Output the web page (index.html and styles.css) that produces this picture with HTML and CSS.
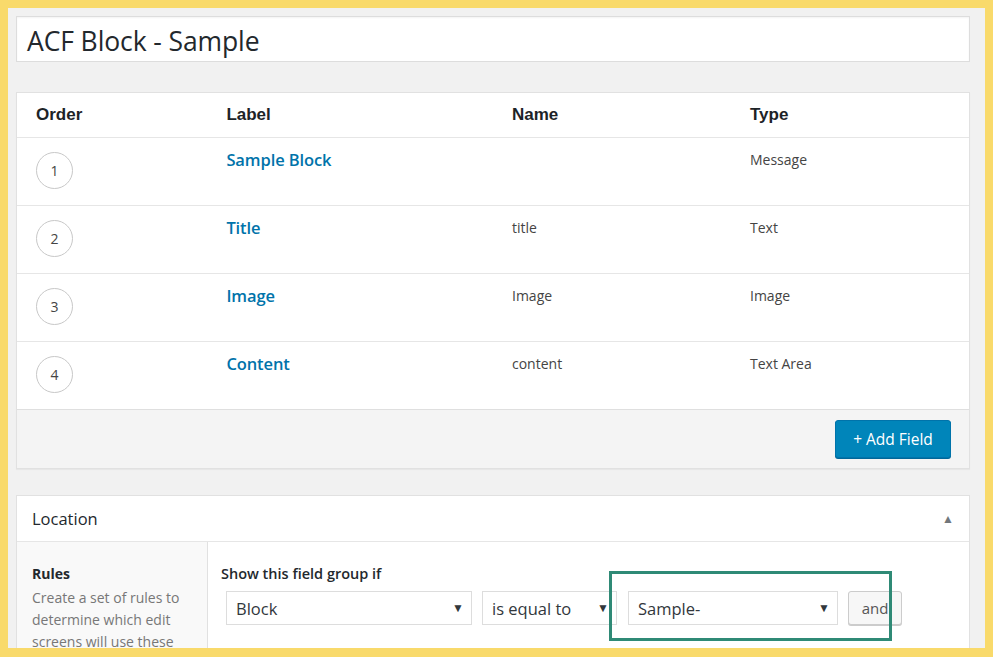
FILE: index.html
```html
<!DOCTYPE html>
<html>
<head>
<meta charset="utf-8">
<link rel="stylesheet" href="styles.css">
</head>
<body>
<div class="frame">
  <div class="title-input">ACF Block - Sample</div>

  <div class="fields">
    <div class="row head">
      <div class="cell c-order">Order</div>
      <div class="cell c-label">Label</div>
      <div class="cell c-name">Name</div>
      <div class="cell c-type">Type</div>
    </div>
    <div class="row">
      <div class="cell c-order"><span class="num">1</span></div>
      <div class="cell c-label"><a class="flabel">Sample Block</a></div>
      <div class="cell c-name"></div>
      <div class="cell c-type">Message</div>
    </div>
    <div class="row">
      <div class="cell c-order"><span class="num">2</span></div>
      <div class="cell c-label"><a class="flabel">Title</a></div>
      <div class="cell c-name">title</div>
      <div class="cell c-type">Text</div>
    </div>
    <div class="row">
      <div class="cell c-order"><span class="num">3</span></div>
      <div class="cell c-label"><a class="flabel">Image</a></div>
      <div class="cell c-name">Image</div>
      <div class="cell c-type">Image</div>
    </div>
    <div class="row">
      <div class="cell c-order"><span class="num">4</span></div>
      <div class="cell c-label"><a class="flabel">Content</a></div>
      <div class="cell c-name">content</div>
      <div class="cell c-type">Text Area</div>
    </div>
    <div class="foot">
      <button class="btn-primary">+ Add Field</button>
    </div>
  </div>

  <div class="location">
    <div class="loc-head">
      <span class="loc-title">Location</span>
      <span class="toggle">&#9650;</span>
    </div>
    <div class="loc-body">
      <div class="loc-side">
        <div class="rules-title">Rules</div>
        <div class="rules-desc">Create a set of rules to determine which edit screens will use these advanced custom fields</div>
      </div>
      <div class="loc-main">
        <div class="show-if">Show this field group if</div>
        <div class="rule">
          <div class="select s-param">Block<span class="arrow">&#9660;</span></div>
          <div class="select s-op">is equal to<span class="arrow">&#9660;</span></div>
          <div class="select s-val">Sample-<span class="arrow">&#9660;</span></div>
          <button class="btn-and">and</button>
          <span class="highlight"></span>
        </div>
      </div>
    </div>
  </div>
</div>
</body>
</html>
```

FILE: styles.css
```css
html, body {
  margin: 0;
  padding: 0;
}
body {
  background: #f9da6b;
  font-family: "Open Sans", "Noto Sans", sans-serif;
  color: #32373c;
  width: 993px;
  height: 657px;
  overflow: hidden;
}
.frame {
  margin: 8px 0 0 8px;
  width: 977px;
  height: 640px;
  box-sizing: border-box;
  padding: 8px 15px 0 8px;
  background: #f1f1f1;
  overflow: hidden;
}
.title-input {
  height: 46px;
  box-sizing: border-box;
  background: #fff;
  border: 1px solid #dddddd;
  box-shadow: inset 0 1px 2px rgba(0,0,0,.05);
  font-size: 26.5px;
  line-height: 48px;
  padding-left: 10px;
  color: #23282d;
  letter-spacing: -0.1px;
}
.fields {
  margin-top: 30px;
  background: #fff;
  border: 1px solid #e1e1e1;
  box-shadow: 0 1px 1px rgba(0,0,0,.04);
}
.row {
  display: grid;
  grid-template-columns: 20% 30% 25% 25%;
  height: 67px;
  border-top: 1px solid #e6e6e6;
  align-items: start;
}
.row.head {
  height: 44px;
  border-top: none;
  align-items: center;
  font-family: "Liberation Sans", Arial, sans-serif;
  font-weight: bold;
  font-size: 17px;
  color: #1d2327;
}
.cell {
  padding-left: 19px;
  font-size: 14px;
  color: #444;
}
.row:not(.head) .cell {
  padding-top: 12px;
  line-height: 20px;
}
.row.head .cell {
  font-size: 17px;
  color: #1d2327;
}
.row:not(.head) .c-order {
  padding-top: 14px;
}
.num {
  display: flex;
  width: 35px;
  height: 35px;
  border: 1px solid #c8c8c8;
  border-radius: 50%;
  align-items: center;
  justify-content: center;
  font-size: 14px;
  color: #444;
}
.row:not(.head) .c-label {
  padding-top: 10px;
}
.flabel {
  font-size: 16.5px;
  font-weight: 600;
  color: #0073aa;
  line-height: 24px;
  letter-spacing: -0.1px;
}
.foot {
  border-top: 1px solid #dfdfdf;
  background: #f4f4f4;
  padding: 10px 18px 10px 0;
  display: flex;
  justify-content: flex-end;
}
.btn-primary {
  width: 116px;
  height: 38px;
  background: #0085ba;
  border: 1px solid #0073aa;
  border-radius: 3px;
  box-shadow: 0 1px 0 #006799;
  color: #fff;
  font-family: "Open Sans", sans-serif;
  font-size: 15.5px;
  padding: 0;
}
.location {
  margin-top: 26px;
  background: #fff;
  border: 1px solid #e1e1e1;
}
.loc-head {
  height: 45px;
  border-bottom: 1px solid #e6e6e6;
  display: flex;
  align-items: center;
  justify-content: space-between;
  padding: 0 15px;
}
.loc-title {
  font-size: 16.5px;
  color: #23282d;
}
.toggle {
  font-size: 12px;
  color: #72777c;
  margin-right: 0;
}
.loc-body {
  display: flex;
}
.loc-side {
  width: 191px;
  flex: none;
  box-sizing: border-box;
  background: #f9f9f9;
  border-right: 1px solid #e1e1e1;
  padding: 21px 10px 0 15px;
  height: 150px;
}
.rules-title {
  font-weight: bold;
  font-size: 14px;
  line-height: 22px;
  color: #23282d;
}
.rules-desc {
  margin-top: 2px;
  font-size: 14px;
  line-height: 22px;
  color: #777;
}
.loc-main {
  padding: 21px 0 0 13px;
  flex: 1;
}
.show-if {
  font-size: 14.5px;
  font-weight: 600;
  line-height: 22px;
  color: #23282d;
}
.rule {
  position: relative;
  display: flex;
  align-items: center;
  margin-top: 6px;
  padding-left: 5px;
}
.select {
  position: relative;
  height: 34px;
  box-sizing: border-box;
  border: 1px solid #dddddd;
  background: #fff;
  font-size: 16.5px;
  line-height: 33px;
  padding-left: 9px;
  color: #32373c;
}
.s-param { width: 246px; }
.s-op { width: 135px; margin-left: 10px; }
.s-val { width: 210px; margin-left: 11px; }
.arrow {
  position: absolute;
  right: 7px;
  top: 0;
  line-height: 32px;
  font-size: 12px;
  color: #32373c;
}
.btn-and {
  margin-left: 10px;
  width: 54px;
  height: 34px;
  background: #f7f7f7;
  border: 1px solid #cccccc;
  border-radius: 3px;
  box-shadow: 0 1px 0 #cccccc;
  font-family: "Open Sans", sans-serif;
  font-size: 15px;
  color: #555;
  padding: 0;
}
.highlight {
  position: absolute;
  left: 388px;
  top: -20px;
  width: 277px;
  height: 64px;
  border: 3px solid #2f8a76;
}
```
